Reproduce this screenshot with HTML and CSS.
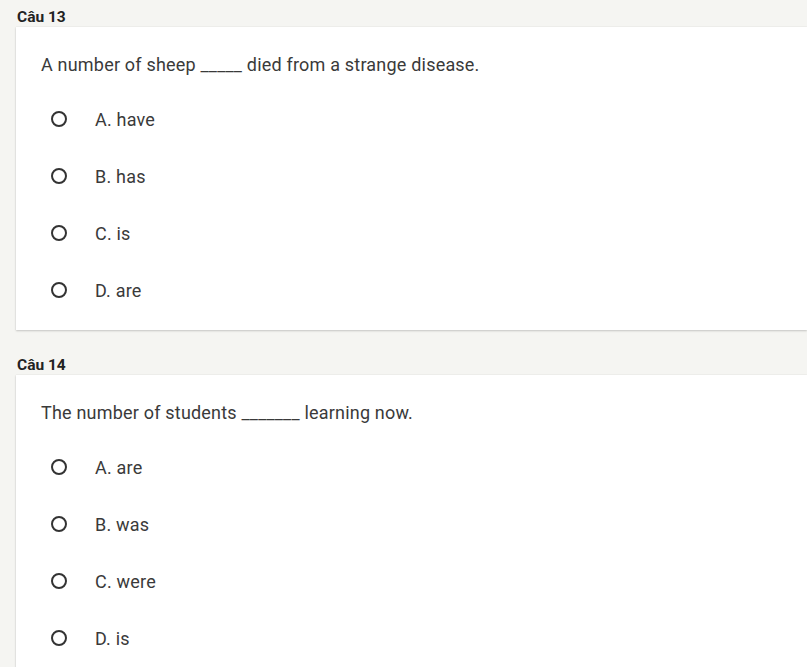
FILE: index.html
```html
<!DOCTYPE html>
<html>
<head>
<meta charset="utf-8">
<link rel="stylesheet" href="styles.css">
</head>
<body>
<div class="page">
  <section class="q">
    <div class="q-label">Câu 13</div>
    <div class="card">
      <div class="q-text">A number of sheep _____ died from a strange disease.</div>
      <ul class="opts">
        <li class="opt"><span class="radio"></span><span class="opt-text">A. have</span></li>
        <li class="opt"><span class="radio"></span><span class="opt-text">B. has</span></li>
        <li class="opt"><span class="radio"></span><span class="opt-text">C. is</span></li>
        <li class="opt"><span class="radio"></span><span class="opt-text">D. are</span></li>
      </ul>
    </div>
  </section>
  <section class="q">
    <div class="q-label">Câu 14</div>
    <div class="card">
      <div class="q-text">The number of students _______ learning now.</div>
      <ul class="opts">
        <li class="opt"><span class="radio"></span><span class="opt-text">A. are</span></li>
        <li class="opt"><span class="radio"></span><span class="opt-text">B. was</span></li>
        <li class="opt"><span class="radio"></span><span class="opt-text">C. were</span></li>
        <li class="opt"><span class="radio"></span><span class="opt-text">D. is</span></li>
      </ul>
    </div>
  </section>
</div>
</body>
</html>
```

FILE: styles.css
```css
html, body {
  margin: 0;
  padding: 0;
  background: #f5f5f2;
  overflow: hidden;
}
body {
  font-family: Roboto, "Liberation Sans", sans-serif;
  color: #333;
}
.page {
  padding: 7px 0 0 16px;
  display: flex;
  flex-direction: column;
  gap: 25px;
}
.q-label {
  font-size: 15.5px;
  font-weight: 700;
  color: #222;
  padding-left: 1px;
  line-height: 20px;
  height: 20px;
}
.card {
  background: #fff;
  box-shadow: 0 1px 2px rgba(0,0,0,0.18), 0 0 1px rgba(0,0,0,0.12);
  padding: 26px 0 25px 25px;
  height: 252px;
}
.q-text {
  font-size: 18px;
  letter-spacing: 0.2px;
  line-height: 24px;
  color: #3a3a3a;
}
.opts {
  list-style: none;
  margin: 30px 0 0 0;
  padding: 0;
  display: flex;
  flex-direction: column;
  gap: 33px;
}
.opt {
  display: flex;
  align-items: center;
  height: 24px;
  padding-left: 10px;
}
.radio {
  width: 12px;
  height: 12px;
  border: 2px solid #333;
  border-radius: 50%;
  flex: none;
}
.opt-text {
  margin-left: 28px;
  font-size: 18px;
  letter-spacing: 0.2px;
  color: #3a3a3a;
}
```
